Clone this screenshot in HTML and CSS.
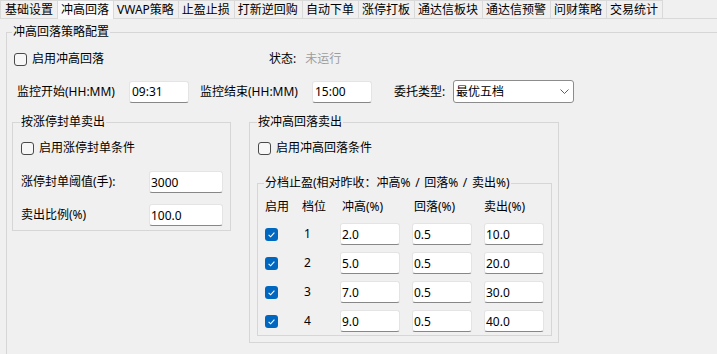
FILE: index.html
```html
<!DOCTYPE html>
<html lang="zh-CN">
<head>
<meta charset="utf-8">
<title>冲高回落</title>
<link rel="stylesheet" href="styles.css">
</head>
<body>
<div class="tabbar">
  <div class="tab">基础设置</div>
  <div class="tab active">冲高回落</div>
  <div class="tab">VWAP策略</div>
  <div class="tab">止盈止损</div>
  <div class="tab">打新逆回购</div>
  <div class="tab">自动下单</div>
  <div class="tab">涨停打板</div>
  <div class="tab">通达信板块</div>
  <div class="tab">通达信预警</div>
  <div class="tab">问财策略</div>
  <div class="tab">交易统计</div>
</div>
<div class="pane">
  <fieldset class="group main">
    <legend>冲高回落策略配置</legend>
    <div class="main-body">
      <div class="row r1">
        <label class="check check-main"><span class="cb"></span>启用冲高回落</label>
        <span class="lbl">状态:</span><span class="muted">未运行</span>
      </div>
      <div class="row r2">
        <span class="lbl l-time">监控开始(HH:MM)</span>
        <input class="edit e-time" type="text" value="09:31">
        <span class="lbl l-time l-end">监控结束(HH:MM)</span>
        <input class="edit e-time" type="text" value="15:00">
        <span class="lbl l-type">委托类型:</span>
        <div class="combo"><span class="combo-text">最优五档</span><svg class="chev" width="9" height="5" viewBox="0 0 9 5"><polyline points="0.5,0.5 4.5,4.5 8.5,0.5" fill="none" stroke="#5f5f5f" stroke-width="1"/></svg></div>
      </div>
      <div class="cols">
        <fieldset class="group left">
          <legend>按涨停封单卖出</legend>
          <div class="left-body">
            <label class="check"><span class="cb"></span>启用涨停封单条件</label>
            <div class="frow f1"><span class="lbl">涨停封单阈值(手):</span><input class="edit e-left" type="text" value="3000"></div>
            <div class="frow f2"><span class="lbl">卖出比例(%)</span><input class="edit e-left" type="text" value="100.0"></div>
          </div>
        </fieldset>
        <fieldset class="group right">
          <legend>按冲高回落卖出</legend>
          <div class="right-body">
            <label class="check check-right"><span class="cb"></span>启用冲高回落条件</label>
            <fieldset class="group inner">
              <legend>分档止盈(相对昨收：冲高% / 回落% / 卖出%)</legend>
              <div class="inner-body">
                <div class="grid">
                  <div class="hd">启用</div><div class="hd">档位</div><div class="hd hd-in">冲高(%)</div><div class="hd hd-in">回落(%)</div><div class="hd">卖出(%)</div>

                  <div class="c-cb"><span class="cb on"><svg width="13" height="13" viewBox="0 0 13 13"><polyline points="3.6,6.9 5.6,8.8 9.4,4.6" fill="none" stroke="#fff" stroke-width="1.1"/></svg></span></div>
                  <div class="c-num">1</div>
                  <div><input class="edit e-grid" type="text" value="2.0"></div>
                  <div><input class="edit e-grid" type="text" value="0.5"></div>
                  <div><input class="edit e-grid" type="text" value="10.0"></div>

                  <div class="c-cb"><span class="cb on"><svg width="13" height="13" viewBox="0 0 13 13"><polyline points="3.6,6.9 5.6,8.8 9.4,4.6" fill="none" stroke="#fff" stroke-width="1.1"/></svg></span></div>
                  <div class="c-num">2</div>
                  <div><input class="edit e-grid" type="text" value="5.0"></div>
                  <div><input class="edit e-grid" type="text" value="0.5"></div>
                  <div><input class="edit e-grid" type="text" value="20.0"></div>

                  <div class="c-cb"><span class="cb on"><svg width="13" height="13" viewBox="0 0 13 13"><polyline points="3.6,6.9 5.6,8.8 9.4,4.6" fill="none" stroke="#fff" stroke-width="1.1"/></svg></span></div>
                  <div class="c-num">3</div>
                  <div><input class="edit e-grid" type="text" value="7.0"></div>
                  <div><input class="edit e-grid" type="text" value="0.5"></div>
                  <div><input class="edit e-grid" type="text" value="30.0"></div>

                  <div class="c-cb"><span class="cb on"><svg width="13" height="13" viewBox="0 0 13 13"><polyline points="3.6,6.9 5.6,8.8 9.4,4.6" fill="none" stroke="#fff" stroke-width="1.1"/></svg></span></div>
                  <div class="c-num">4</div>
                  <div><input class="edit e-grid" type="text" value="9.0"></div>
                  <div><input class="edit e-grid" type="text" value="0.5"></div>
                  <div><input class="edit e-grid" type="text" value="40.0"></div>
                </div>
              </div>
            </fieldset>
          </div>
        </fieldset>
      </div>
    </div>
  </fieldset>
</div>
</body>
</html>
```

FILE: styles.css
```css
* { box-sizing: border-box; }

html, body {
  margin: 0;
  padding: 0;
  overflow: hidden;
}

body {
  width: 717px;
  height: 354px;
  background: #f0f0f0;
  color: #000;
  font-family: "Noto Sans", "Noto Sans CJK SC", sans-serif;
  font-size: 12px;
  line-height: 16px;
}

/* ---- tabs ---- */
.tabbar {
  display: flex;
  align-items: flex-start;
  height: 19px;
  border-bottom: 1px solid #d9d9d9;
}

.tab {
  height: 18px;
  padding: 0 4px 0 3px;
  line-height: 17px;
  white-space: nowrap;
  background: #f0f0f0;
  border-top: 1px solid #d9d9d9;
  border-right: 1px solid #d9d9d9;
}

.tab:first-child { border-left: 1px solid #d9d9d9; padding-left: 4px; }

.tab.active {
  height: 19px;
  background: #f9f9f9;
}

/* ---- group boxes ---- */
.pane {
  padding: 5px 0 0 6px;
}

fieldset.group {
  margin: 0;
  padding: 0;
  min-width: 0;
  border: 1px solid #d6d6d6;
}

fieldset.group > legend {
  padding: 0 1px;
  margin-left: 7px;
  line-height: 16px;
}

fieldset.main {
  width: 760px;
  height: 380px;
}

fieldset.main > legend { margin-left: 5px; }

.main-body {
  padding: 11px 0 0 5px;
}

.row {
  display: flex;
  align-items: center;
}

.r1 {
  height: 16px;
  padding-left: 2px;
}

.r2 {
  height: 23px;
  margin-top: 13px;
  padding-left: 5px;
}

.lbl { white-space: nowrap; }

.muted {
  margin-left: 9px;
  color: #9d9d9d;
}

/* ---- checkbox ---- */
.check {
  display: flex;
  align-items: center;
  height: 16px;
  white-space: nowrap;
}

.check-main { width: 255px; }

.cb {
  display: inline-block;
  flex: none;
  width: 13px;
  height: 13px;
  margin-right: 5px;
  border: 1px solid #4a4a4a;
  border-radius: 3px;
  background: #f7f7f7;
}

.cb.on {
  margin-right: 0;
  border: none;
  background: #0067c0;
}

.cb.on svg { display: block; }

/* ---- edits ---- */
.edit {
  display: block;
  height: 22px;
  margin: 0;
  padding: 0 1px;
  font: inherit;
  color: #000;
  background: #fff;
  border: 1px solid #e4e4e4;
  border-bottom-color: #878787;
  border-radius: 3px;
  outline: none;
}

.e-time { width: 60px; padding-left: 2px; }

.l-time { width: 112px; }
.l-end { margin-left: 11px; }
.l-type { width: 59px; margin-left: 22px; }

.combo {
  display: flex;
  align-items: center;
  justify-content: space-between;
  width: 121px;
  height: 23px;
  padding: 0 4px 0 2px;
  background: #fff;
  border: 1px solid #8c8c8c;
  border-radius: 3px;
}

.chev { display: block; }

/* ---- lower columns ---- */
.cols {
  display: flex;
  align-items: flex-start;
  gap: 18px;
  margin-top: 11px;
}

fieldset.left { width: 219px; flex: none; }

.left-body {
  padding: 10px 7px 4px 8px;
}

.frow {
  display: flex;
  align-items: center;
  justify-content: space-between;
  height: 22px;
}

.f1 { margin-top: 15px; }
.f2 { margin-top: 11px; }

.e-left { width: 74px; }

fieldset.right { width: 310px; flex: none; }

.right-body {
  padding: 10px 6px 6px 7px;
}

.check-right { margin-left: 1px; }

fieldset.inner {
  width: 295px;
  margin-top: 19px;
}

fieldset.inner > legend {
  margin-left: 6px;
  word-spacing: 1.5px;
}

.inner-body {
  padding: 8px 6px 3px 7px;
}

.grid {
  display: grid;
  grid-template-columns: 37px 38px 72px 72px 60px;
  grid-template-rows: 17px repeat(4, 22px);
  row-gap: 7px;
}

.hd { white-space: nowrap; }
.hd-in { padding-left: 2px; }

.c-cb {
  display: flex;
  align-items: center;
}

.c-num {
  display: flex;
  align-items: center;
  padding-left: 2px;
}

.e-grid { width: 60px; }
```
